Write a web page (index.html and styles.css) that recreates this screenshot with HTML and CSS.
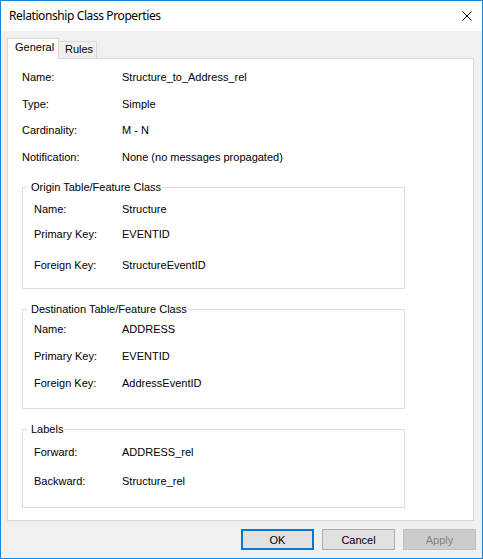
FILE: index.html
```html
<!DOCTYPE html>
<html>
<head>
<meta charset="utf-8">
<link rel="stylesheet" href="styles.css">
</head>
<body>
<div class="window">
  <div class="titlebar">
    <span class="title">Relationship Class Properties</span>
    <svg class="close" width="10" height="10" viewBox="0 0 10 10"><path d="M0.5 0.5 L9.5 9.5 M9.5 0.5 L0.5 9.5" stroke="#000" stroke-width="1" fill="none"/></svg>
  </div>
  <div class="client">
    <div class="tabs">
      <div class="tab active">General</div>
      <div class="tab">Rules</div>
    </div>
    <div class="panel">
      <div class="props">
        <div class="row"><span class="lbl">Name:</span><span>Structure_to_Address_rel</span></div>
        <div class="row"><span class="lbl">Type:</span><span>Simple</span></div>
        <div class="row"><span class="lbl">Cardinality:</span><span>M - N</span></div>
        <div class="row"><span class="lbl">Notification:</span><span>None (no messages propagated)</span></div>
      </div>

      <fieldset class="group origin">
        <legend>Origin Table/Feature Class</legend>
        <div class="row"><span class="lbl">Name:</span><span>Structure</span></div>
        <div class="row"><span class="lbl">Primary Key:</span><span>EVENTID</span></div>
        <div class="row"><span class="lbl">Foreign Key:</span><span>StructureEventID</span></div>
      </fieldset>

      <fieldset class="group dest">
        <legend>Destination Table/Feature Class</legend>
        <div class="row"><span class="lbl">Name:</span><span>ADDRESS</span></div>
        <div class="row"><span class="lbl">Primary Key:</span><span>EVENTID</span></div>
        <div class="row"><span class="lbl">Foreign Key:</span><span>AddressEventID</span></div>
      </fieldset>

      <fieldset class="group labels">
        <legend>Labels</legend>
        <div class="row"><span class="lbl">Forward:</span><span>ADDRESS_rel</span></div>
        <div class="row"><span class="lbl">Backward:</span><span>Structure_rel</span></div>
      </fieldset>
    </div>
    <div class="buttons">
      <button class="btn default">OK</button>
      <button class="btn">Cancel</button>
      <button class="btn disabled">Apply</button>
    </div>
  </div>
</div>
</body>
</html>
```

FILE: styles.css
```css
* { box-sizing: border-box; }
html, body { margin: 0; padding: 0; background: #fff; }
body {
  font-family: "Liberation Sans", Arial, sans-serif;
  font-size: 11px;
  color: #000;
}
.window {
  width: 483px;
  height: 559px;
  border: 1px solid #1883d7;
  display: flex;
  flex-direction: column;
  background: #f0f0f0;
}
.titlebar {
  height: 30px;
  background: #fff;
  display: flex;
  align-items: center;
  justify-content: space-between;
  padding: 0 10px 1px 8px;
}
.title {
  font-family: "Noto Sans", sans-serif;
  font-size: 12px;
  letter-spacing: -0.4px;
  color: #000;
}
.close { display: block; }
.client {
  flex: 1;
  display: flex;
  flex-direction: column;
  padding: 7px 6px 8px 6px;
}
.tabs {
  display: flex;
  align-items: flex-end;
  height: 20px;
  position: relative;
  z-index: 1;
}
.tab {
  height: 17px;
  line-height: 15px;
  padding: 0 6px;
  border: 1px solid #d9d9d9;
  border-bottom: none;
  background: #f0f0f0;
  margin-left: -1px;
}
.tab.active {
  height: 21px;
  margin-bottom: -1px;
  margin-left: 0;
  background: #fff;
  line-height: 17px;
  padding: 0 7px 0 7px;
  width: 52px;
}
.tab:not(.active) { width: 39px; }
.panel {
  height: 463px;
  margin-right: 2px;
  background: #fff;
  border: 1px solid #d9d9d9;
  padding: 11px 14px 0 14px;
}
.row {
  display: flex;
  height: 14px;
  line-height: 14px;
  white-space: nowrap;
}
.props { display: flex; flex-direction: column; gap: 12.5px; }
.props .lbl { width: 100px; }
.group {
  margin: 0;
  width: 383px;
  border: 1px solid #dcdcdc;
  padding: 0 0 0 11px;
  min-inline-size: 0;
}
.group legend {
  line-height: 13px;
  padding: 0 1px 0 4px;
  margin-left: -7px;
}
.group .lbl { width: 88px; }
.origin { margin-top: 17px; padding-top: 8px; padding-bottom: 16px; }
.origin .row + .row { margin-top: 11px; }
.origin .row:last-child { margin-top: 17px; }
.dest { margin-top: 14px; padding-top: 6px; padding-bottom: 18px; }
.dest .row + .row { margin-top: 13px; }
.labels { margin-top: 14px; padding-top: 9px; padding-bottom: 19px; }
.labels .row + .row { margin-top: 15px; }
.buttons {
  display: flex;
  justify-content: flex-end;
  gap: 8px;
  margin-top: 8px;
}
.btn {
  width: 73px;
  height: 21px;
  font-family: "Liberation Sans", Arial, sans-serif;
  font-size: 11px;
  color: #000;
  background: #e1e1e1;
  border: 1px solid #adadad;
  padding: 0;
  margin: 0;
}
.btn.default { border: 2px solid #0078d7; }
.btn.disabled {
  background: #cccccc;
  border-color: #bfbfbf;
  color: #838383;
}
```
